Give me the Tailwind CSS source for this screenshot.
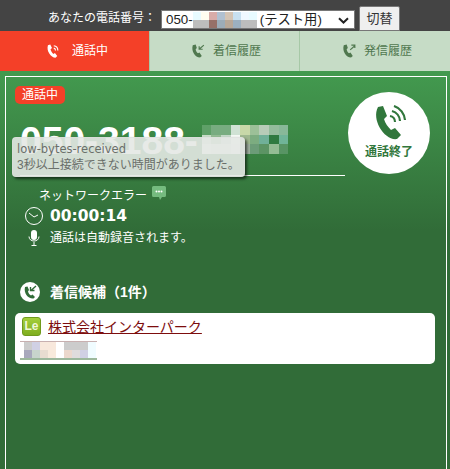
<!DOCTYPE html>
<html lang="ja">
<head>
    <meta charset="UTF-8">
    <title>通話中</title>
    <script src="https://cdn.jsdelivr.net/npm/@tailwindcss/browser@4"></script>
</head>
<body class="w-[450px] h-[469px] overflow-hidden font-['Liberation_Sans','Noto_Sans_CJK_JP',sans-serif]">
    <!-- 電話番号 -->
    <header class="h-[31px] bg-[#444444] flex items-start pl-[48px] pt-[6px] text-[12px] text-white">
        <span class="mt-[4px] w-[113px] whitespace-nowrap leading-[16px]">あなたの電話番号：</span>
        <div class="relative w-[194px] h-[19px] mt-[4px] bg-white border border-[#777777] flex items-center text-[13.33px] text-[#222222] pl-[4px] leading-none whitespace-nowrap">
            <span>050-</span>
            <div class="grid grid-cols-[repeat(8,8px)] grid-rows-[repeat(2,8px)] h-[16px] w-[67px]">
                <i class="bg-[#e8fbff]"></i><i class="bg-[#fffdf0]"></i><i class="bg-[#d8aca8]"></i><i class="bg-[#b0c0d0]"></i><i class="bg-[#d4c4b4]"></i><i class="bg-[#c8e0f0]"></i><i class="bg-[#f0f8ff]"></i><i class="bg-[#e8fbff]"></i>
                <i class="bg-[#bdbdbd]"></i><i class="bg-[#bdbdbd]"></i><i class="bg-[#967068]"></i><i class="bg-[#9cacb8]"></i><i class="bg-[#b8a898]"></i><i class="bg-[#9cb0c0]"></i><i class="bg-[#bdbdbd]"></i><i class="bg-[#bdbdbd]"></i>
            </div>
            <span>(テスト用)</span>
            <svg class="absolute right-[5px] top-[6px]" width="11" height="7" viewBox="0 0 11 7"><path d="M1 1.200l4.500 4.300L10 1.200" fill="none" stroke="#222" stroke-width="2"/></svg>
        </div>
        <button class="ml-[4px] w-[41px] h-[25px] bg-[#efefef] border border-[#777777] rounded-t-[2px] text-[13px] text-[#333333]">切替</button>
    </header>

    <!-- タブ -->
    <nav class="flex h-[40px] text-[12px]">
        <a class="w-[149px] bg-[#f44028] text-white flex items-center pl-[45px] gap-[13px]">
            <svg width="14" height="14" viewBox="0 0 24 24"><path d="M5 2L9 1l3 6-2.500 2c.5 3 2.500 6 5 8l2.500-1.500 4 5-3 3C10 23 2 12 5 2z" fill="#fff"/><path d="M15 7a4 4 0 0 1 3 4M15 3a8 8 0 0 1 7 8" fill="none" stroke="#fff" stroke-width="2"/></svg>
            <span>通話中</span>
        </a>
        <a class="w-[150px] bg-[#c6dcc6] border-l border-[#a6c8a6] text-[#50784f] flex items-center pl-[41px] gap-[8px]">
            <svg width="14" height="14" viewBox="0 0 24 24"><path d="M3 2L8 1l2 6-2 2c.5 3 1.500 5 4 7l2.500-1.500 4 6-3 2.500C7 23 0 12 3 2z" fill="#50784f"/><path d="M22 2l-8 7M14 4v5h6" fill="none" stroke="#50784f" stroke-width="2"/></svg>
            <span>着信履歴</span>
        </a>
        <a class="w-[151px] bg-[#c6dcc6] border-l border-[#a6c8a6] text-[#50784f] flex items-center pl-[42px] gap-[8px]">
            <svg width="14" height="14" viewBox="0 0 24 24"><path d="M3 2L8 1l2 6-2 2c.5 3 1.500 5 4 7l2.500-1.500 4 6-3 2.500C7 23 0 12 3 2z" fill="#50784f"/><path d="M14 10l8-7M16 2h6v5" fill="none" stroke="#50784f" stroke-width="2"/></svg>
            <span>発信履歴</span>
        </a>
    </nav>

    <!-- 通話画面 -->
    <main class="relative h-[398px] pt-[5px] pl-[5px] pr-[3px] bg-[linear-gradient(#439a4f_0px,#316c38_160px)]">
        <div class="h-[393px] border-x border-t border-white pl-[9px] pr-[11px] pt-[9px] text-white">
            <div class="w-fit h-[18px] px-[7px] rounded-[5px] bg-[#f44028] text-[12px] leading-[18px]">通話中</div>

            <div class="flex items-start justify-between">
                <div class="w-[325px] ml-[5px] h-[72px] border-b border-white flex items-start pt-[15px]">
                    <span class="text-[39px] leading-[44px] font-bold whitespace-nowrap">050-3188-</span>
                    <div class="mt-[6px] ml-[4px] grid grid-cols-[repeat(9,9.6px)] grid-rows-[repeat(3,9.500px)]">
                        <i class="bg-[#5fa068]"></i><i class="bg-[#78ac80]"></i><i class="bg-[#78ac80]"></i><i class="bg-[#d0e2d4]"></i><i class="bg-[#c8d8a8]"></i><i class="bg-[#9cc098]"></i><i class="bg-[#b8ccb8]"></i><i class="bg-[#94bc9c]"></i><i class="bg-[#88b898]"></i>
                        <i class="bg-[#c8dcc8]"></i><i class="bg-[#94bc94]"></i><i class="bg-[#c4d8c8]"></i><i class="bg-[#f4f8f4]"></i><i class="bg-[#a0b890]"></i><i class="bg-[#7cac80]"></i><i class="bg-[#70b098]"></i><i class="bg-[#2f7a40]"></i><i class="bg-[#70b498]"></i>
                        <i class="bg-[#e8f0e8]"></i><i class="bg-[#e0e8e0]"></i><i class="bg-[#e0e8e0]"></i><i class="bg-[#f0f4f0]"></i><i class="bg-[#a0b0a0]"></i><i class="bg-[#6c9c78]"></i><i class="bg-[#5c9464]"></i><i class="bg-[#94bc94]"></i><i class="bg-[#589464]"></i>
                    </div>
                </div>
                <button class="-mt-[12px] mr-[5px] w-[82px] h-[82px] rounded-full bg-white text-[#31773c] flex flex-col items-center pt-[13px]">
                    <svg width="36" height="36" viewBox="0 0 36 36"><path d="M7 2l5-1 4 10-3 3c1 4 4 8 7 11l4-2 6 7-4 4C14 36 0 15 7 2z" fill="#31773c"/><path d="M19 11a6 6 0 0 1 5 6M21 6a11 11 0 0 1 8 10M23 1a16 16 0 0 1 11 14" fill="none" stroke="#31773c" stroke-width="2.200"/></svg>
                    <span class="mt-[3px] text-[12px] leading-[16px] font-bold">通話終了</span>
                </button>
            </div>

            <div class="mt-[10px] ml-[24px] flex items-start text-[12px] leading-[16px]">
                <span class="mt-[2px]">ネットワークエラー</span>
                <svg class="ml-[5px]" width="14" height="15" viewBox="0 0 14 15"><path d="M1.500 0h11A1.500 1.500 0 0 1 14 1.500v8a1.500 1.500 0 0 1-1.500 1.500H10l-2 3-1-3H1.500A1.500 1.500 0 0 1 0 9.500v-8A1.500 1.500 0 0 1 1.500 0z" fill="#75bb7f"/><circle cx="4.500" cy="5.500" r="1" fill="#fff"/><circle cx="7" cy="5.500" r="1" fill="#fff"/><circle cx="9.500" cy="5.500" r="1" fill="#fff"/></svg>
            </div>
            <div class="mt-[1px] ml-[10px] flex items-center gap-[7px] h-[22px]">
                <svg width="18" height="18" viewBox="0 0 18 18"><circle cx="9" cy="9" r="8.500" fill="none" stroke="#fff"/><path d="M4 6l5 4 4-2" fill="none" stroke="#fff"/></svg>
                <span class="font-['DejaVu_Sans'] text-[15.5px] leading-[20px] font-bold">00:00:14</span>
            </div>
            <div class="mt-[1px] ml-[13px] flex items-center gap-[10px] h-[20px] text-[12px]">
                <svg width="12" height="16" viewBox="0 0 12 16"><rect x="3" y="0" width="6" height="10" rx="3" fill="#fff"/><path d="M1 6.500c0 6 10 6 10 0M6 12v3M3.500 15.500h5" fill="none" stroke="#fff"/></svg>
                <span>通話は自動録音されます。</span>
            </div>

            <div class="mt-[33px] ml-[5px] flex items-center gap-[10px] h-[22px] text-[14px] font-bold">
                <svg width="20" height="20" viewBox="0 0 20 20"><circle cx="10" cy="10" r="10" fill="#fff"/><path d="M5 5l2.500-.5L9 8 8 9.500c.5 2 1.500 3 3 4l1.500-1 2.500 2.500-1.500 1.500C8 17 3.500 11 5 5z" fill="#316c38"/><path d="M16 4l-5 4.500M10.500 5v3.500h4" fill="none" stroke="#316c38" stroke-width="1.400"/></svg>
                <span>着信候補（1件）</span>
            </div>

            <div class="mt-[10px] h-[51px] bg-white rounded-[5px] pl-[7px] pt-[4px]">
                <div class="flex items-start gap-[7px]">
                    <span class="w-[19px] h-[19px] rounded-[3px] bg-[linear-gradient(#a5cf3c,#7fae1f)] border border-[#6f9a1c] text-[#f2f7d8] text-[12px] leading-[17px] font-bold text-center">Le</span>
                    <a class="mt-[1px] text-[14px] leading-[19px] text-[#7d0d0d] underline whitespace-nowrap">株式会社インターパーク</a>
                </div>
                <div class="mt-[4px] w-[77px] -ml-[2px] h-[19px] border-t border-[#c8b0b0] border-b-2 border-b-[#9cb89c] grid grid-cols-[repeat(9,8px)] grid-rows-[repeat(2,8px)] pl-[4px]">
                    <i class="bg-[#cccccc]"></i><i class="bg-[#d0d0e4]"></i><i class="bg-[#f8e8dc]"></i><i class="bg-[#f8e8dc]"></i><i class="bg-white"></i><i class="bg-[#cccccc]"></i><i class="bg-[#cccccc]"></i><i class="bg-[#cccccc]"></i><i class="bg-[#f0fcff]"></i>
                    <i class="bg-[#a8a8bc]"></i><i class="bg-[#c8d4cc]"></i><i class="bg-[#e8dcd0]"></i><i class="bg-[#f8eadc]"></i><i class="bg-white"></i><i class="bg-[#ecd8cc]"></i><i class="bg-[#e0dcdc]"></i><i class="bg-[#d0d0e4]"></i><i class="bg-[#f0fcff]"></i>
                </div>
            </div>
        </div>

        <!-- ツールチップ -->
        <div class="absolute left-[12px] top-[66px] w-[233px] h-[40px] rounded-[4px] bg-[#e4e8e4]/90 border border-[#dddddd]/60 shadow-[2px_2px_3px_rgba(0,0,0,0.6)] pl-[4px] pt-[3px] text-[12px] leading-[16px] text-[#6a6f6a]">
            <div class="font-['DejaVu_Sans'] text-[11.5px]">low-bytes-received</div>
            <div class="whitespace-nowrap">3秒以上接続できない時間がありました。</div>
        </div>
    </main>
</body>
</html>
